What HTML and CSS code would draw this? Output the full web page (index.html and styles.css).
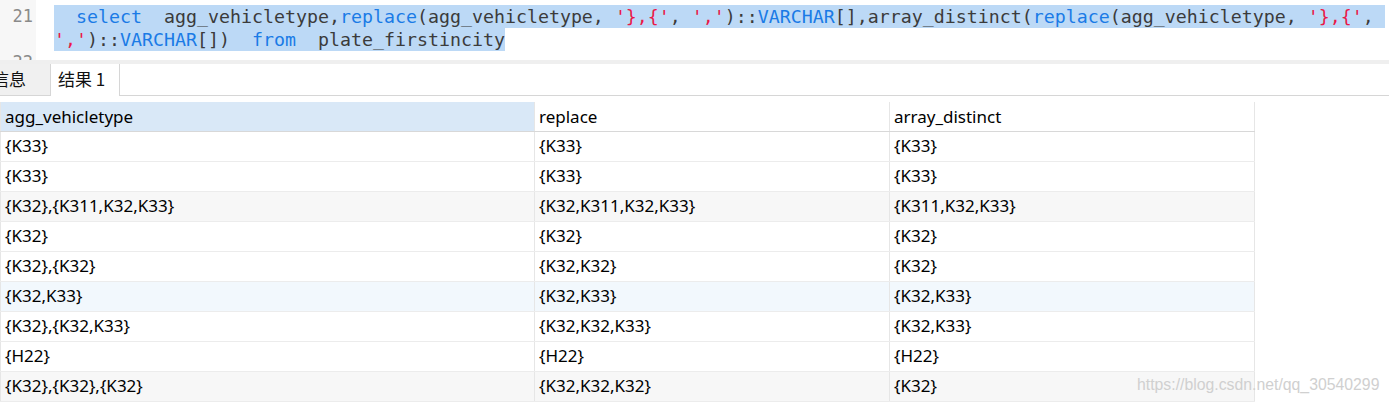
FILE: index.html
```html
<!DOCTYPE html>
<html>
<head>
<meta charset="utf-8">
<link rel="stylesheet" href="styles.css">
</head>
<body>
<div class="editor">
  <div class="gutter">
    <div class="ln">21</div>
    <div class="ln"></div>
    <div class="ln">22</div>
  </div>
  <div class="code">
    <div class="line"><span class="sel">  <span class="kw">select</span>  agg_vehicletype,<span class="kw">replace</span>(agg_vehicletype, <span class="str">'},{'</span>, <span class="str">','</span>)::<span class="kw">VARCHAR</span>[],array_distinct(<span class="kw">replace</span>(agg_vehicletype, <span class="str">'},{'</span>, </span></div>
    <div class="line"><span class="sel"><span class="str">','</span>)::<span class="kw">VARCHAR</span>[])  <span class="kw">from</span>  plate_firstincity</span></div>
    <div class="line"></div>
  </div>
</div>
<div class="splitter"></div>
<div class="tabs">
  <div class="tab tab-info">信息</div>
  <div class="tab tab-active">结果 1</div>
  <div class="tab-rest"></div>
</div>
<div class="grid-area">
  <table class="grid">
    <colgroup><col class="c1"><col class="c2"><col class="c3"></colgroup>
    <thead>
      <tr><th class="th-sel">agg_vehicletype</th><th>replace</th><th>array_distinct</th></tr>
    </thead>
    <tbody>
      <tr><td>{K33}</td><td>{K33}</td><td>{K33}</td></tr>
      <tr><td>{K33}</td><td>{K33}</td><td>{K33}</td></tr>
      <tr class="alt"><td>{K32},{K311,K32,K33}</td><td>{K32,K311,K32,K33}</td><td>{K311,K32,K33}</td></tr>
      <tr><td>{K32}</td><td>{K32}</td><td>{K32}</td></tr>
      <tr><td>{K32},{K32}</td><td>{K32,K32}</td><td>{K32}</td></tr>
      <tr class="hover"><td>{K32,K33}</td><td>{K32,K33}</td><td>{K32,K33}</td></tr>
      <tr><td>{K32},{K32,K33}</td><td>{K32,K32,K33}</td><td>{K32,K33}</td></tr>
      <tr><td>{H22}</td><td>{H22}</td><td>{H22}</td></tr>
      <tr class="alt"><td>{K32},{K32},{K32}</td><td>{K32,K32,K32}</td><td>{K32}</td></tr>
    </tbody>
  </table>
</div>
<div class="watermark">https://blog.csdn.net/qq_30540299</div>
</body>
</html>
```
FILE: styles.css
```css
html, body {
  margin: 0;
  padding: 0;
  background: #ffffff;
  width: 1389px;
  height: 402px;
  overflow: hidden;
}
body {
  position: relative;
  font-family: "Noto Sans", "Noto Sans CJK SC", sans-serif;
}
.editor {
  display: flex;
  height: 60px;
  overflow: hidden;
  background: #ffffff;
}
.gutter {
  width: 36px;
  flex: none;
  background: #f7f7f7;
  padding-top: 5px;
  box-sizing: border-box;
}
.ln {
  height: 23px;
  line-height: 23px;
  font-family: "DejaVu Sans Mono", monospace;
  font-size: 17px;
  color: #8a8a8a;
  text-align: right;
  padding-right: 3px;
}
.code {
  padding-top: 5px;
  padding-left: 18px;
  font-family: "DejaVu Sans Mono", monospace;
  font-size: 18.27px;
  color: #3b3b3b;
}
.line {
  height: 23px;
  line-height: 23px;
  white-space: pre;
}
.sel {
  background: #bcd9f6;
  display: inline-block;
  height: 23px;
}
.kw { color: #1a7be6; }
.str { color: #ea1848; }
.splitter {
  height: 4px;
  background: #efefef;
}
.tabs {
  display: flex;
  height: 32px;
  overflow: hidden;
  font-family: "Noto Sans CJK SC", sans-serif;
  font-size: 17px;
  color: #111;
}
.tab {
  height: 32px;
  line-height: 30px;
  box-sizing: border-box;
  flex: none;
}
.tab-info {
  margin-left: -8px;
  width: 59px;
  background: #f0f0f0;
  border-bottom: 1px solid #d6d6d6;
  border-right: 1px solid #d6d6d6;
}
.tab-active {
  background: #ffffff;
  border-right: 1px solid #d6d6d6;
  width: 69px;
  padding-left: 7px;
}
.tab-rest {
  flex: 1;
  border-bottom: 1px solid #d6d6d6;
}
.grid-area {
  padding-top: 6px;
}
.grid {
  border-collapse: collapse;
  table-layout: fixed;
  width: 1254px;
  font-family: "Noto Sans", sans-serif;
  font-size: 17px;
  color: #000;
}
.c1 { width: 534px; }
.c2 { width: 355px; }
.c3 { width: 365px; }
.grid tr { height: 30px; }
.grid th, .grid td {
  padding: 0 4px 2px 4px;
  text-align: left;
  font-weight: normal;
  border-left: 1px solid #e6e6e6;
  border-right: 1px solid #e6e6e6;
  border-bottom: 1px solid #ececec;
  white-space: nowrap;
  overflow: hidden;
}
.grid th {
  padding-bottom: 0;
}
.grid thead tr { height: 29px; }
.grid th {
  border-bottom: 1px solid #d8d8d8;
}
.grid th.th-sel {
  background: #d9e8f7;
}
.grid tr.alt td { background: #f7f7f7; }
.grid tr.hover td { background: #f2f8fd; }
.watermark {
  position: absolute;
  left: 1137px;
  top: 376px;
  font-family: "Liberation Sans", Arial, sans-serif;
  font-size: 15.8px;
  color: #d0d0d0;
}
```
